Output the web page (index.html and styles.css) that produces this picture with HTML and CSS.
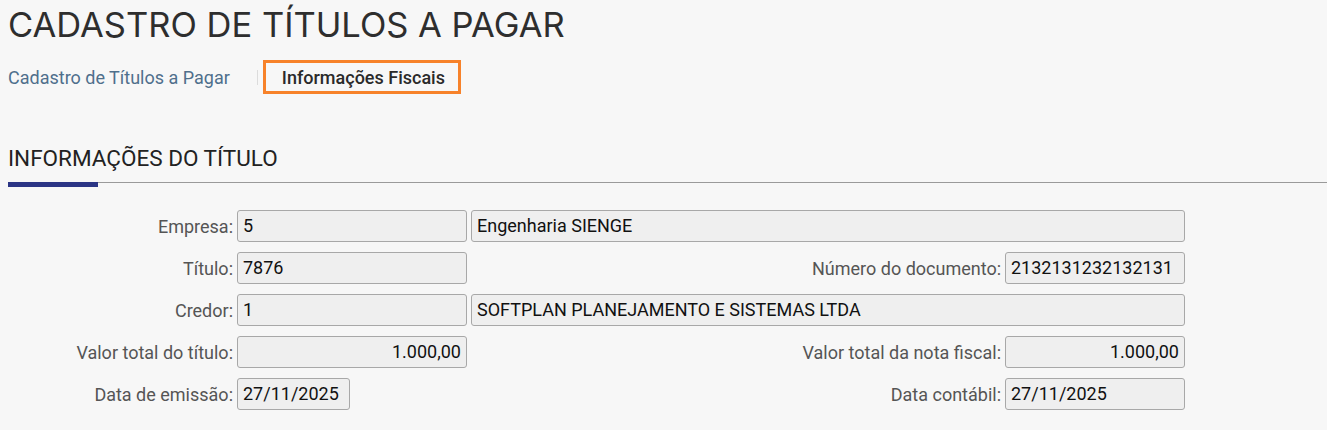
FILE: index.html
```html
<!DOCTYPE html>
<html lang="pt-BR">
<head>
<meta charset="utf-8">
<title>Cadastro de Títulos a Pagar</title>
<link rel="stylesheet" href="styles.css">
</head>
<body>
<div class="page">
  <h1 class="page-title">CADASTRO DE TÍTULOS A PAGAR</h1>
  <nav class="tabs">
    <a class="tab">Cadastro de Títulos a Pagar</a>
    <span class="tab-sep"></span>
    <a class="tab tab-active">Informações Fiscais</a>
  </nav>
  <section class="section">
    <h2 class="section-title">INFORMAÇÕES DO TÍTULO</h2>
    <div class="form">
      <label class="lbl">Empresa:</label>
      <div class="inp">5</div>
      <div class="inp span2">Engenharia SIENGE</div>

      <label class="lbl">Título:</label>
      <div class="inp">7876</div>
      <label class="lbl">Número do documento:</label>
      <div class="inp">2132131232132131</div>

      <label class="lbl">Credor:</label>
      <div class="inp">1</div>
      <div class="inp span2">SOFTPLAN PLANEJAMENTO E SISTEMAS LTDA</div>

      <label class="lbl">Valor total do título:</label>
      <div class="inp num">1.000,00</div>
      <label class="lbl">Valor total da nota fiscal:</label>
      <div class="inp num">1.000,00</div>

      <label class="lbl">Data de emissão:</label>
      <div class="cell"><div class="inp date">27/11/2025</div></div>
      <label class="lbl">Data contábil:</label>
      <div class="inp">27/11/2025</div>
    </div>
  </section>
</div>
</body>
</html>
```

FILE: styles.css
```css
* { box-sizing: border-box; }
html, body { margin: 0; padding: 0; }
body {
  background: #f7f7f7;
  font-family: Roboto, "Liberation Sans", Arial, sans-serif;
  color: #333;
}
.page { padding: 4px 0 0 8px; }
.page-title {
  margin: 0;
  font-family: Inter, "Liberation Sans", sans-serif;
  font-weight: 400;
  font-size: 34.5px;
  line-height: 42px;
  color: #2e2e2e;
  letter-spacing: 0;
}
.tabs {
  display: flex;
  align-items: center;
  margin-top: 14px;
  height: 34px;
}
.tab {
  font-size: 18px;
  color: #4f6f8c;
  text-decoration: none;
}
.tab-sep {
  width: 1px;
  height: 15px;
  background: #dcdcdc;
  margin: 0 5px 0 27px;
}
.tab-active {
  border: 3px solid #f7822a;
  height: 34px;
  display: flex;
  align-items: center;
  padding: 0 13px 0 16px;
  font-weight: 500;
  color: #2a2a2a;
}
.section { margin-top: 50px; }
.section-title {
  margin: 0;
  font-weight: 400;
  font-size: 22.5px;
  line-height: 28px;
  color: #222;
  padding-bottom: 10px;
  border-bottom: 1px solid #9a9a9a;
  position: relative;
}
.section-title::after {
  content: "";
  position: absolute;
  left: 0;
  bottom: -5px;
  width: 90px;
  height: 5px;
  background: #2b3585;
}
.form {
  margin-top: 27px;
  width: 1177px;
  display: grid;
  grid-template-columns: 225px 230px 1fr 180px;
  column-gap: 4px;
  row-gap: 10px;
  align-items: center;
}
.lbl {
  text-align: right;
  font-size: 18px;
  color: #555;
  white-space: nowrap;
}
.inp {
  height: 32px;
  line-height: 30px;
  border: 1px solid #a8a8a8;
  border-radius: 3px;
  background: #efefef;
  padding: 0 5px;
  font-size: 18px;
  color: #111;
  white-space: nowrap;
  overflow: hidden;
}
.span2 { grid-column: span 2; }
.num { text-align: right; }
.date { width: 113px; }
```
